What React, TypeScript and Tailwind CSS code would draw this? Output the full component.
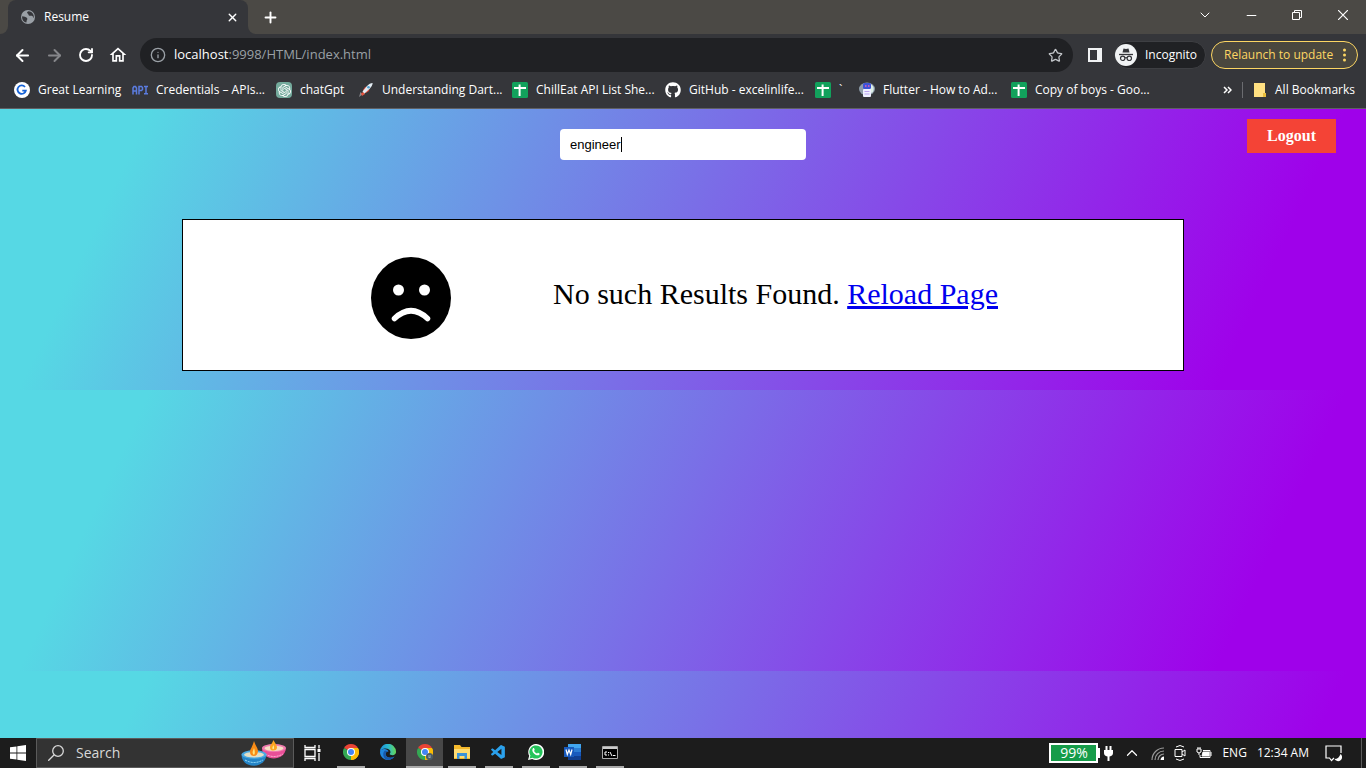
import React from "react";
import {
  ArrowLeft, ArrowRight, RotateCw, Star, X, Plus, ChevronDown, Minus, ChevronUp, Info,
} from "lucide-react";
import { FaGithub } from "react-icons/fa";
import { SiOpenai } from "react-icons/si";
import { VscVscode } from "react-icons/vsc";
import { MdOutlineHome } from "react-icons/md";

const ui = "font-['Open_Sans','Noto_Sans',sans-serif]";

function Globe() {
  return (
    <svg viewBox="0 0 16 16" className="size-4" aria-hidden="true">
      <circle cx="8" cy="8" r="7" fill="#9aa0a6" />
      <path d="M2.2 7.2c2 .2 3.6.7 4.6 1.5 1 .8.5 1.8 0 2.5-.4.7 0 1.500-.5 2.3C3.600 12.9 1.7 10.5 2.2 7.2Z" fill="#35363a" />
      <path d="M8.500 2.2c-1.500.8-2 1.600-.8 2.300 1.100.6.3 1.700 1.700 2.200 1.400.4 2.200-.3 3.200.6.7.7.3 1.600 1 1.700.9-2.900-1-6.400-5.100-6.8Z" fill="#35363a" />
    </svg>
  );
}

function Sheet() {
  return (
    <svg viewBox="0 0 16 16" className="size-4" aria-hidden="true">
      <rect width="16" height="16" rx="1.5" fill="#12a15c" />
      <path d="M2 5h12v2H8.600v7h-2V7H2V5Zm4.600-2.500h2V5h-2Z" fill="#fff" />
    </svg>
  );
}

function Google() {
  return (
    <svg viewBox="0 0 16 16" className="size-4" aria-hidden="true">
      <circle cx="8" cy="8" r="8" fill="#fff" />
      <path d="M11 5A4.200 4.200 0 1 0 11.800 8.700H8.300" fill="none" stroke="#1763d6" strokeWidth="1.8" />
    </svg>
  );
}

function ApiMark() {
  return (
    <svg viewBox="0 0 16 16" className="size-4" fill="none" stroke="#5b7ce0" strokeWidth="1.5" aria-hidden="true">
      <path d="M1 12.500V6l1-1.500h1.500l1 1.500v6.500M1 9h3.500M7 12.500V4.500h2.500l1 1v2l-1 1H7M12 4.500h4M14 4.500v7.300M12 11.800h4" />
    </svg>
  );
}

function Rocket() {
  return (
    <svg viewBox="0 0 16 16" className="size-4" aria-hidden="true">
      <path d="M1 15l1.500-5 2 2.500Z" fill="#8b8d92" />
      <path d="M3 11l3-1 1 2-3 2Z" fill="#e5533d" />
      <path d="M5 8l2-3 2.500-.5-4 5ZM8 11l3-2 .5-2.500L7 10Z" fill="#d84536" />
      <path d="M4.500 9.500 9 4c2-2 3.500-2.700 5.700-3-.3 2.200-1.200 3.800-3 5.700L6.500 11.500Z" fill="#e3edf4" />
      <circle cx="10.5" cy="5.3" r="1.3" fill="#4c9fd1" />
    </svg>
  );
}

function Robot() {
  return (
    <svg viewBox="0 0 16 16" className="size-4" aria-hidden="true">
      <ellipse cx="8" cy="7" rx="8" ry="6.5" fill="#8d9caa" />
      <path d="M11 2c4 1 5 6 2 9l-2-1Z" fill="#dceee6" />
      <rect x="4" y="1" width="8" height="6" rx="1.5" fill="#3d54d6" />
      <path d="M6 4h1.500M9 4h1.500" stroke="#ef5bb0" strokeWidth="1.5" />
      <rect x="4" y="7" width="8" height="8" rx="1" fill="#eef0ff" />
      <path d="M5.500 9.500h5M5.500 12h5" stroke="#b9a2ef" />
    </svg>
  );
}

function Incognito() {
  return (
    <svg viewBox="0 0 22 22" className="size-[22px] shrink-0" aria-hidden="true">
      <circle cx="11" cy="11" r="11" fill="#f1f3f4" />
      <path d="M7.500 8.500 8.500 4.500l2.500.6 2.500-.6 1 4Z" fill="#35363a" />
      <path d="M4 10.500h14" stroke="#35363a" strokeWidth="1.3" />
      <g fill="none" stroke="#35363a" strokeWidth="1.2">
        <circle cx="7.7" cy="14.3" r="2.2" /><circle cx="14.3" cy="14.3" r="2.2" /><path d="M9.900 14c.7-.5 1.500-.5 2.200 0" />
      </g>
    </svg>
  );
}

const bookmarks: { label: string; width: string; icon: React.ReactNode }[] = [
  { label: "Great Learning", width: "w-[118px]", icon: <Google /> },
  { label: "Credentials – APIs...", width: "w-36", icon: <ApiMark /> },
  {
    label: "chatGpt",
    width: "w-[82px]",
    icon: <span className="flex size-4 items-center justify-center rounded-sm bg-[#74aa9c] text-white"><SiOpenai size={13} /></span>,
  },
  { label: "Understanding Dart...", width: "w-[154px]", icon: <Rocket /> },
  { label: "ChillEat API List She...", width: "w-[153px]", icon: <Sheet /> },
  { label: "GitHub - excelinlife...", width: "w-[150px]", icon: <FaGithub size={16} color="#fff" /> },
  { label: "`", width: "w-11", icon: <Sheet /> },
  { label: "Flutter - How to Ad...", width: "w-[152px]", icon: <Robot /> },
  { label: "Copy of boys - Goo...", width: "w-[152px]", icon: <Sheet /> },
];

function BrowserChrome() {
  return (
    <header className={`${ui} shrink-0 bg-[#35363a] text-xs text-white`}>
      <div className="flex h-[34px] bg-[#4b4945]">
        <div className="w-2 bg-[#35363a]"><div className="h-full rounded-br-lg bg-[#4b4945]" /></div>
        <div className="flex w-60 items-center rounded-t-lg bg-[#35363a] pr-2 pl-3">
          <Globe />
          <span className="ml-2 flex-1">Resume</span>
          <button aria-label="Close tab" className="flex size-4 items-center justify-center"><X size={13} strokeWidth={2.5} /></button>
        </div>
        <div className="w-2 bg-[#35363a]"><div className="h-full rounded-bl-lg bg-[#4b4945]" /></div>
        <button aria-label="New tab" className="flex w-7 items-center justify-center"><Plus size={17} strokeWidth={2.7} /></button>
        <div className="flex-1" />
        <div className="flex items-center pb-1">
          <button aria-label="Search tabs" className="flex w-[46px] justify-center"><ChevronDown size={16} strokeWidth={1.5} /></button>
          <button aria-label="Minimize" className="flex w-[46px] justify-center"><Minus size={15} strokeWidth={1.6} /></button>
          <button aria-label="Restore" className="flex w-[46px] justify-center">
            <svg viewBox="0 0 10 10" className="size-[10px]" fill="none" stroke="currentColor"><path d="M.5 2.500h7v7h-7ZM2.500 2.500v-2h7v7h-2" /></svg>
          </button>
          <button aria-label="Close" className="flex w-[46px] justify-center">
            <svg viewBox="0 0 10 10" className="size-[10px]" fill="none" stroke="currentColor" strokeWidth="1.2"><path d="m0 0 10 10M10 0 0 10" /></svg>
          </button>
        </div>
      </div>
      <div className="flex h-[42px] items-center pr-2 pl-3">
        <div className="mr-3 flex gap-3">
          <button aria-label="Back" className="flex size-5 items-center justify-center"><ArrowLeft size={19} strokeWidth={2.5} /></button>
          <button aria-label="Forward" className="flex size-5 items-center justify-center text-[#85868a]"><ArrowRight size={19} strokeWidth={2.5} /></button>
          <button aria-label="Reload" className="flex size-5 items-center justify-center"><RotateCw size={16} strokeWidth={2.8} /></button>
          <button aria-label="Home" className="flex size-5 items-center justify-center"><MdOutlineHome size={22} /></button>
        </div>
        <div className="flex h-[34px] flex-1 items-center rounded-full bg-[#202124] px-[10px]">
          <Info size={16} color="#9aa0a6" />
          <div className="ml-2 flex-1 text-[13px] text-[#9aa0a6]"><span className="text-white">localhost</span>:9998/HTML/index.html</div>
          <button aria-label="Bookmark this page"><Star size={15} color="#c4c7cb" /></button>
        </div>
        <button aria-label="Side panel" className="ml-[15px] h-[14px] w-[14px] border-2 border-r-[5px] border-[#f1f3f4]" />
        <button className="ml-3 flex h-7 w-[92px] items-center gap-2 rounded-full border border-[#3e3f43] bg-[#202124]"><Incognito />Incognito</button>
        <button className="ml-[5px] flex h-7 w-[147px] items-center justify-between rounded-full border border-[#fdd663] bg-[#4a473e] pr-[11px] pl-3 text-[#fdd663]">
          Relaunch to update
          <svg viewBox="0 0 3 14" className="h-[14px] w-[3px]" fill="currentColor"><circle cx="1.5" cy="2" r="1.5" /><circle cx="1.5" cy="7" r="1.5" /><circle cx="1.5" cy="12" r="1.5" /></svg>
        </button>
      </div>
      <nav className="flex h-[33px] items-center border-b border-[#5f6064] pr-[11px] pb-1 pl-[14px]">
        {bookmarks.map((b, i) => (
          <a key={i} href="#" className={`${b.width} flex shrink-0 items-center gap-2 whitespace-nowrap`}>
            <span className="shrink-0">{b.icon}</span>{b.label}
          </a>
        ))}
        <div className="flex-1" />
        <button aria-label="More bookmarks">
          <svg viewBox="0 0 9 8" className="h-2 w-[9px]" fill="none" stroke="currentColor" strokeWidth="1.5"><path d="m1 1 3 3-3 3M5 1l3 3-3 3" /></svg>
        </button>
        <div className="mx-[10px] h-4 w-px bg-[#6b6c70]" />
        <a href="#" className="flex items-center gap-2 whitespace-nowrap">
          <svg viewBox="0 0 14 16" className="h-4 w-[14px]"><path d="M1 1h11v10h1v4H1Z" fill="#ffe082" /><path d="M10 11h3v4h-3Z" fill="#e8bd3d" /></svg>
          All Bookmarks
        </a>
      </nav>
    </header>
  );
}

function SadFace() {
  return (
    <svg viewBox="0 0 80 82" className="h-[82px] w-20 shrink-0" role="img" aria-label="Sad face">
      <ellipse cx="40" cy="41" rx="40" ry="41" />
      <circle cx="27.5" cy="33" r="5.5" fill="#fff" /><circle cx="53.5" cy="33" r="5.5" fill="#fff" />
      <path d="M23.500 61.500Q40 46 56.500 61.500" fill="none" stroke="#fff" strokeWidth="5.5" strokeLinecap="round" />
    </svg>
  );
}

function Page() {
  return (
    <main className="relative flex-1 bg-[linear-gradient(115deg,#56d8e4_10%,#9f01ea_90%)] bg-[length:100%_281px] font-['Liberation_Serif',serif]">
      <div className="flex justify-center pt-5">
        <div className="relative">
          <input aria-label="Search" defaultValue="engineer" className="h-[31px] w-[246px] rounded bg-white px-[10px] font-['Liberation_Sans',sans-serif] text-[13px] text-black caret-transparent outline-none" />
          <span className="absolute top-2 left-[61px] h-[15px] w-px bg-black" />
        </div>
      </div>
      <button className="absolute top-[10px] right-[30px] h-[34px] bg-[#f44336] px-5 text-base font-bold text-white">Logout</button>
      <section className="mx-auto mt-[59px] flex h-[152px] w-[1002px] max-w-full items-start border border-black bg-white pt-[37px] pl-[188px]">
        <SadFace />
        <p className="ml-[102px] text-[30px] leading-[74px] whitespace-nowrap text-black">No such Results Found. <a href="#" className="text-[#0000ee] underline">Reload Page</a></p>
      </section>
    </main>
  );
}

function Chrome({ badge }: { badge?: boolean }) {
  return (
    <svg viewBox="0 0 16 16" className="size-4" aria-hidden="true">
      <path d="M8 8 1.070 4A8 8 0 0 1 14.930 4Z" fill="#ea4335" />
      <path d="M8 8 14.930 4A8 8 0 0 1 8 16Z" fill="#fbbc04" />
      <path d="M8 8V16A8 8 0 0 1 1.070 4Z" fill="#34a853" />
      <path d="M8 4h6.930A8 8 0 0 1 8 16l3.500-6Z" fill="#fbbc04" />
      <circle cx="8" cy="8" r="4" fill="#fff" /><circle cx="8" cy="8" r="3" fill="#4285f4" />
      {badge && <><circle cx="12.5" cy="12.5" r="3.5" fill="#4c5d68" /><path d="M11 12h3M11.500 13.500h2" stroke="#9aabb5" /></>}
    </svg>
  );
}

function Edge() {
  return (
    <svg viewBox="0 0 16 16" className="size-4" aria-hidden="true">
      <defs><linearGradient id="edge" x1="0" x2="1"><stop stopColor="#1b8fdc" /><stop offset=".5" stopColor="#2ab9cf" /><stop offset="1" stopColor="#66d652" /></linearGradient></defs>
      <path d="M0 8a8 8 0 0 1 16-.5c.2 2.300-1.200 3.700-3.300 3.700-1.700 0-3-.5-3-1.200 0-.5.8-.7.8-2C10.500 5.500 7.500 4 4.500 4.500 2 5 .4 6.500 0 8Z" fill="url(#edge)" />
      <path d="M0 8c.2-2.200 2.500-3.500 5-3 2 .4 3.200 1.500 3.500 2.600C6 7.500 5 9.500 6 11.500c1.200 2.500 5.500 3 8.500 1C12.500 15.500 9 16.500 6 15.700 2.300 14.700 0 11.500 0 8Z" fill="#1f86de" />
      <path d="M5 6.500C2 9 3 14 6.500 15.800 9 16.300 12.500 15.300 14.500 12.500c-3 2-7.300 1.500-8.500-1-1-2 0-4 2.500-3.900Z" fill="#1758ac" />
    </svg>
  );
}

function Explorer() {
  return (
    <svg viewBox="0 0 16 14" className="h-[14px] w-4" aria-hidden="true">
      <path d="M0 0h6l1.500 2H16v12H0Z" fill="#f4b92c" /><path d="M0 4h16v9H0Z" fill="#ffdc72" />
      <path d="M3 14V8h10v6h-2.500v-3h-5v3Z" fill="#3b92d8" />
    </svg>
  );
}

function WhatsApp() {
  return (
    <svg viewBox="0 0 16 16" className="size-4" aria-hidden="true">
      <path d="M0 16l1.200-4.200A8 8 0 1 1 4.200 14.900Z" fill="#fff" />
      <path d="m1.600 14.400.8-2.800a6.600 6.600 0 1 1 2.200 2.100Z" fill="#25c45b" />
      <path d="M5 4.200c.5-.3 1-.2 1.200.3l.5 1.300c.1.400-.5.800-.6 1.100.6 1.200 1.500 2 2.800 2.600.4-.1.800-1 1.200-.8l1.300.7c.5.300.2 1-.3 1.500-1.100 1-3.200.3-4.900-1.200S3.500 6 5 4.200Z" fill="#fff" />
    </svg>
  );
}

function Word() {
  return (
    <svg viewBox="0 0 17 16" className="h-4 w-[17px]" aria-hidden="true">
      <path d="M4 0h13v4H4Z" fill="#41a5ee" /><path d="M4 4h13v4H4Z" fill="#2b7cd3" /><path d="M4 8h13v4H4Z" fill="#185abd" /><path d="M4 12h13v4H4Z" fill="#103f91" />
      <rect y="3" width="10" height="10" fill="#185abd" /><path d="m2 5.500 1.300 5L5 6l1.700 4.500 1.300-5" fill="none" stroke="#fff" strokeWidth="1.2" />
    </svg>
  );
}

function Terminal() {
  return (
    <svg viewBox="0 0 16 13" className="h-[13px] w-4" fill="none" stroke="#fff" aria-hidden="true">
      <path d="M.5.5h15v12H.5Z" fill="#000" stroke="#aaa" /><path d="M1 2h14" strokeWidth="2" stroke="#ccc" />
      <path d="M5 6H3v3h2M6.500 6v1M6.500 8.500v1M8 6l2 4M11 9.500h2.500" />
    </svg>
  );
}

function Diyas() {
  return (
    <svg viewBox="0 0 46 26" className="h-[26px] w-[46px]" aria-hidden="true">
      <path d="M21 8c0 14 23 14 24 0Z" fill="#e94f98" />
      <ellipse cx="33" cy="8" rx="12" ry="4" fill="#f07db0" /><ellipse cx="33" cy="8.3" rx="9.5" ry="2.6" fill="#f6dfc4" />
      <path d="M24 14q9 5 18 0" fill="none" stroke="#ffc1dc" strokeDasharray="2 1" />
      <path d="M32.500 0c-1.500 4-3.500 5-3.500 7.500s1.500 3 3.500 3 3.500-1 3.500-3S34.500 4 32.500 0Z" fill="#ffa51f" /><path d="M32.500 5c-1 2-1.500 3-.8 4s2 0 .8-4Z" fill="#fff0a0" />
      <path d="M.5 14.500c0 15 24 15 25 0Z" fill="#2585c7" />
      <ellipse cx="13" cy="14.5" rx="12.5" ry="4.3" fill="#4aa9e2" /><ellipse cx="13" cy="14.8" rx="10" ry="2.8" fill="#e2dfc6" />
      <path d="M4 20q9 5 18 0" fill="none" stroke="#a2e4ff" strokeDasharray="2 1" />
      <path d="M13 1c-1.500 6-4 8-4 11s2 4 4 4 4-2 4-5-2.500-5-4-10Z" fill="#f98b16" /><path d="M13 8c-1 3-2 4-1 6s3 0 1-6Z" fill="#ffe57c" />
    </svg>
  );
}

const apps = [
  { name: "Chrome", icon: <Chrome />, open: true },
  { name: "Edge", icon: <Edge />, open: false },
  { name: "Chrome Incognito", icon: <Chrome badge />, open: true, active: true },
  { name: "File Explorer", icon: <Explorer />, open: true },
  { name: "Visual Studio Code", icon: <VscVscode size={17} color="#2ba1ec" />, open: true },
  { name: "WhatsApp", icon: <WhatsApp />, open: true },
  { name: "Word", icon: <Word />, open: true },
  { name: "Command Prompt", icon: <Terminal />, open: true },
];

function Taskbar() {
  return (
    <footer className={`${ui} flex h-[30px] shrink-0 items-stretch bg-[#1c1c1c] text-xs text-white`}>
      <button aria-label="Start" className="flex w-9 items-center justify-center">
        <svg viewBox="0 0 16 16" className="size-4" fill="currentColor"><path d="M0 2.300 6.500 1.400V7.600H0ZM7.300 1.300 16 0V7.600H7.300ZM0 8.400H6.500V14.600L0 13.700ZM7.300 8.400H16V16L7.300 14.700Z" /></svg>
      </button>
      <button className="flex w-[258px] items-center border border-[#5b5b5b] bg-[#333] pr-[6px] pl-[11px] text-sm text-[#d8d8d8]">
        <svg viewBox="0 0 16 16" className="mr-3 size-4" fill="none" stroke="currentColor" strokeWidth="1.3"><circle cx="10" cy="6" r="5.3" /><path d="m6.200 9.800-6 6" /></svg>
        Search<span className="flex-1" /><Diyas />
      </button>
      <button aria-label="Task view" className="mr-[2px] flex w-9 items-center justify-center">
        <svg viewBox="0 0 17 16" className="h-4 w-[17px]" fill="none" stroke="currentColor" strokeWidth="1.3"><path d="M1 0v2.500h10V0M1 4.500h10v7H1ZM1 16v-2.500h10V16M15 0v3.500M15 8v8" /><path d="M13.500 4h3v3h-3Z" fill="currentColor" stroke="none" /></svg>
      </button>
      {apps.map((a) => (
        <button key={a.name} aria-label={a.name} className={`flex w-[37px] flex-col items-center ${a.active ? "bg-[#484848]" : ""}`}>
          <span className="flex flex-1 items-center justify-center">{a.icon}</span>
          <span className={`h-[2px] ${a.active ? "w-full" : "w-7"} ${a.open ? "bg-[#aaa]" : ""}`} />
        </button>
      ))}
      <div className="flex-1" />
      <div className="flex items-center">
        <div className="flex h-5 w-[49px] items-center justify-center border-2 border-white bg-[#169c49] text-sm">99%</div>
        <div className="mr-1 h-[10px] w-[2px] bg-white" />
        <svg viewBox="0 0 9 15" className="mr-[10px] h-[15px] w-[9px]" fill="currentColor"><path d="M1.500 0h2v4h2V0h2v4H9v3c0 2-1 3-3.500 3.500V15h-2v-4.500C1 10 0 9 0 7V4h1.500Z" /></svg>
        <ChevronUp size={18} strokeWidth={1.6} className="mr-[10px]" />
        <svg viewBox="0 0 13 13" className="mr-[10px] size-[13px]" fill="none" stroke="#999" strokeWidth="1.2"><path d="M1 13A12 12 0 0 1 13 1M4 13a9 9 0 0 1 9-9M7 13a6 6 0 0 1 6-6" /><path d="M9.500 13A4 4 0 0 1 13 9.500V13Z" fill="#fff" stroke="none" /></svg>
        <svg viewBox="0 0 12 16" className="mr-[10px] h-4 w-3" fill="none" stroke="currentColor"><path d="M1 4.500h7v7H1ZM8 7l3-2v6L8 9M2 2q4-3 8 0M2 14q4 3 8 0" /></svg>
        <svg viewBox="0 0 16 12" className="mr-[10px] h-3 w-4" fill="none" stroke="currentColor"><path d="M7 3.500h7v7H4V8M15 5v4M1 2h4v3L3 6 1 5ZM2 2V0M4 2V0M3 6v2" /><path d="M7 5h6v4H6Z" fill="currentColor" /></svg>
        <span className="mr-[10px]">ENG</span>
        <span className="mr-4 whitespace-nowrap">12:34 AM</span>
        <button aria-label="Notifications" className="mr-[19px]">
          <svg viewBox="0 0 17 17" className="size-[17px]" fill="none" stroke="currentColor" strokeWidth="1.2"><path d="M9 13 6.500 15.500 4.500 13H1V1h15v7" /><path d="M15.500 9a4 4 0 1 1-6 5c3 0 5-2 6-5Z" fill="currentColor" stroke="none" /></svg>
        </button>
        <div className="mr-1 h-[30px] w-px bg-[#5b5b5b]" />
      </div>
    </footer>
  );
}

export default function App() {
  return (
    <div className="flex min-h-screen flex-col overflow-x-hidden">
      <BrowserChrome />
      <Page />
      <Taskbar />
    </div>
  );
}
